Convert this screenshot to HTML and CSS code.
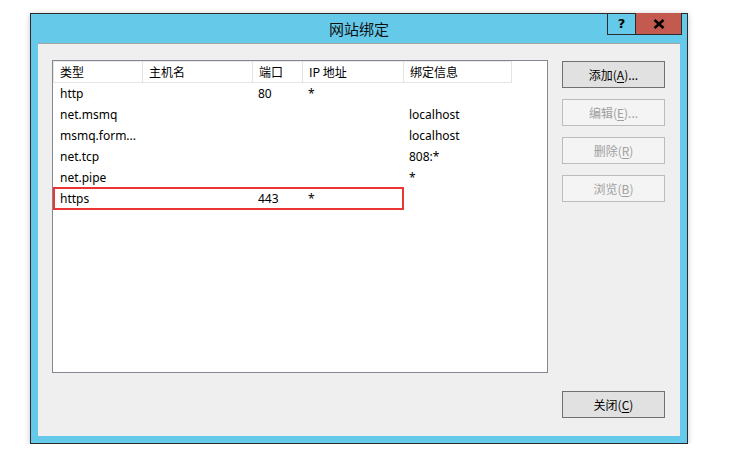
FILE: index.html
```html
<!DOCTYPE html>
<html lang="zh-CN">
<head>
<meta charset="utf-8">
<title>网站绑定</title>
<link rel="stylesheet" href="styles.css">
</head>
<body>
<div class="window">
  <div class="titlebar">
    <div class="title">网站绑定</div>
    <div class="caption">
      <div class="cap-btn help">?</div>
      <div class="cap-btn close">
        <svg width="12" height="10" viewBox="0 0 12 10"><path d="M1.5 1 L10.5 9 M10.5 1 L1.5 9" stroke="#000" stroke-width="2.6" fill="none"/></svg>
      </div>
    </div>
  </div>
  <div class="client">
    <div class="main">
      <div class="listbox">
        <div class="header">
          <div class="col c1">类型</div>
          <div class="col c2">主机名</div>
          <div class="col c3">端口</div>
          <div class="col c4">IP 地址</div>
          <div class="col c5">绑定信息</div>
        </div>
        <div class="rows">
          <div class="row"><div class="col c1">http</div><div class="col c2"></div><div class="col c3">80</div><div class="col c4">*</div><div class="col c5"></div></div>
          <div class="row"><div class="col c1">net.msmq</div><div class="col c2"></div><div class="col c3"></div><div class="col c4"></div><div class="col c5">localhost</div></div>
          <div class="row"><div class="col c1">msmq.form...</div><div class="col c2"></div><div class="col c3"></div><div class="col c4"></div><div class="col c5">localhost</div></div>
          <div class="row"><div class="col c1">net.tcp</div><div class="col c2"></div><div class="col c3"></div><div class="col c4"></div><div class="col c5">808:*</div></div>
          <div class="row"><div class="col c1">net.pipe</div><div class="col c2"></div><div class="col c3"></div><div class="col c4"></div><div class="col c5">*</div></div>
          <div class="row"><div class="col c1">https</div><div class="col c2"></div><div class="col c3">443</div><div class="col c4">*</div><div class="col c5"></div></div>
          <div class="highlight"></div>
        </div>
      </div>
      <div class="buttons">
        <div class="btn">添加(<u>A</u>)...</div>
        <div class="btn disabled">编辑(<u>E</u>)...</div>
        <div class="btn disabled">删除(<u>R</u>)</div>
        <div class="btn disabled">浏览(<u>B</u>)</div>
      </div>
    </div>
    <div class="footer">
      <div class="btn">关闭(<u>C</u>)</div>
    </div>
  </div>
</div>
</body>
</html>
```

FILE: styles.css
```css
* { box-sizing: border-box; }
body {
  margin: 0;
  background: #fff;
  font-family: "Noto Sans", "Noto Sans CJK SC", sans-serif;
  font-size: 12px;
  color: #000;
}
.window {
  margin: 13px 0 0 30px;
  width: 658px;
  height: 431px;
  border: 1px solid #2b2b2b;
  background: #65c9ea;
  display: flex;
  flex-direction: column;
  box-shadow: 0 1px 6px rgba(0, 0, 0, 0.22);
}
.titlebar {
  height: 29px;
  flex: none;
  display: grid;
  grid-template-columns: 1fr auto;
}
.title {
  grid-area: 1 / 1 / 2 / 3;
  text-align: center;
  line-height: 30px;
  font-family: "Noto Sans CJK SC", sans-serif;
  font-size: 15px;
  color: #111;
}
.caption {
  grid-area: 1 / 2 / 2 / 3;
  align-self: start;
  margin-top: -1px;
  margin-right: 5px;
  display: flex;
  height: 22px;
  position: relative;
}
.cap-btn {
  height: 22px;
  border: 1px solid #2b2b2b;
  border-top: none;
  display: flex;
  align-items: center;
  justify-content: center;
}
.help {
  width: 28px;
  border-right: none;
  font-family: "DejaVu Sans", sans-serif;
  font-weight: bold;
  font-size: 13px;
}
.close {
  width: 47px;
  background: #c25a4f;
}
.client {
  flex: 1;
  margin: 0 7px 7px 7px;
  background: #efefef;
  border-top: 1px solid #a3a3a3;
  padding: 16px 0 0 14px;
}
.main {
  display: flex;
  align-items: flex-start;
  gap: 14px;
}
.listbox {
  width: 496px;
  height: 313px;
  border: 1px solid #828790;
  background: #fff;
}
.header {
  display: flex;
  height: 22px;
  border-top: 1px solid #e8e8e8;
  border-bottom: 1px solid #e5e5e5;
  border-left: 1px solid #e8e8e8;
  margin-right: 35px;
}
.header .col {
  border-right: 1px solid #e3e3e3;
  line-height: 19px;
  font-family: "Noto Sans CJK SC", sans-serif;
  font-size: 12px;
}
.col {
  flex: none;
  padding-left: 6px;
  white-space: nowrap;
  overflow: hidden;
}
.c1 { width: 89px; }
.c2 { width: 110px; }
.c3 { width: 50px; }
.c4 { width: 101px; }
.c5 { width: 108px; }
.rows {
  position: relative;
}
.row {
  display: flex;
  height: 21px;
  line-height: 21px;
}
.row .col { padding-left: 6px; }
.row .c1 { padding-left: 7px; }
.highlight {
  position: absolute;
  left: 0;
  top: 104px;
  width: 351px;
  height: 23px;
  border: 2px solid #ec3535;
}
.buttons {
  margin-top: 1px;
  width: 103px;
  display: flex;
  flex-direction: column;
  gap: 11px;
}
.btn {
  width: 103px;
  height: 27px;
  border: 1px solid #707070;
  background: #e1e1e1;
  display: flex;
  align-items: center;
  justify-content: center;
  font-family: "Noto Sans CJK SC", sans-serif;
  font-size: 12px;
  color: #000;
}
.btn u { text-underline-offset: 2px; }
.btn.disabled {
  background: #f4f4f4;
  border-color: #bcbcbc;
  color: #a0a0a0;
}
.footer {
  display: flex;
  justify-content: flex-end;
  padding-right: 15px;
  margin-top: 18px;
}
```
